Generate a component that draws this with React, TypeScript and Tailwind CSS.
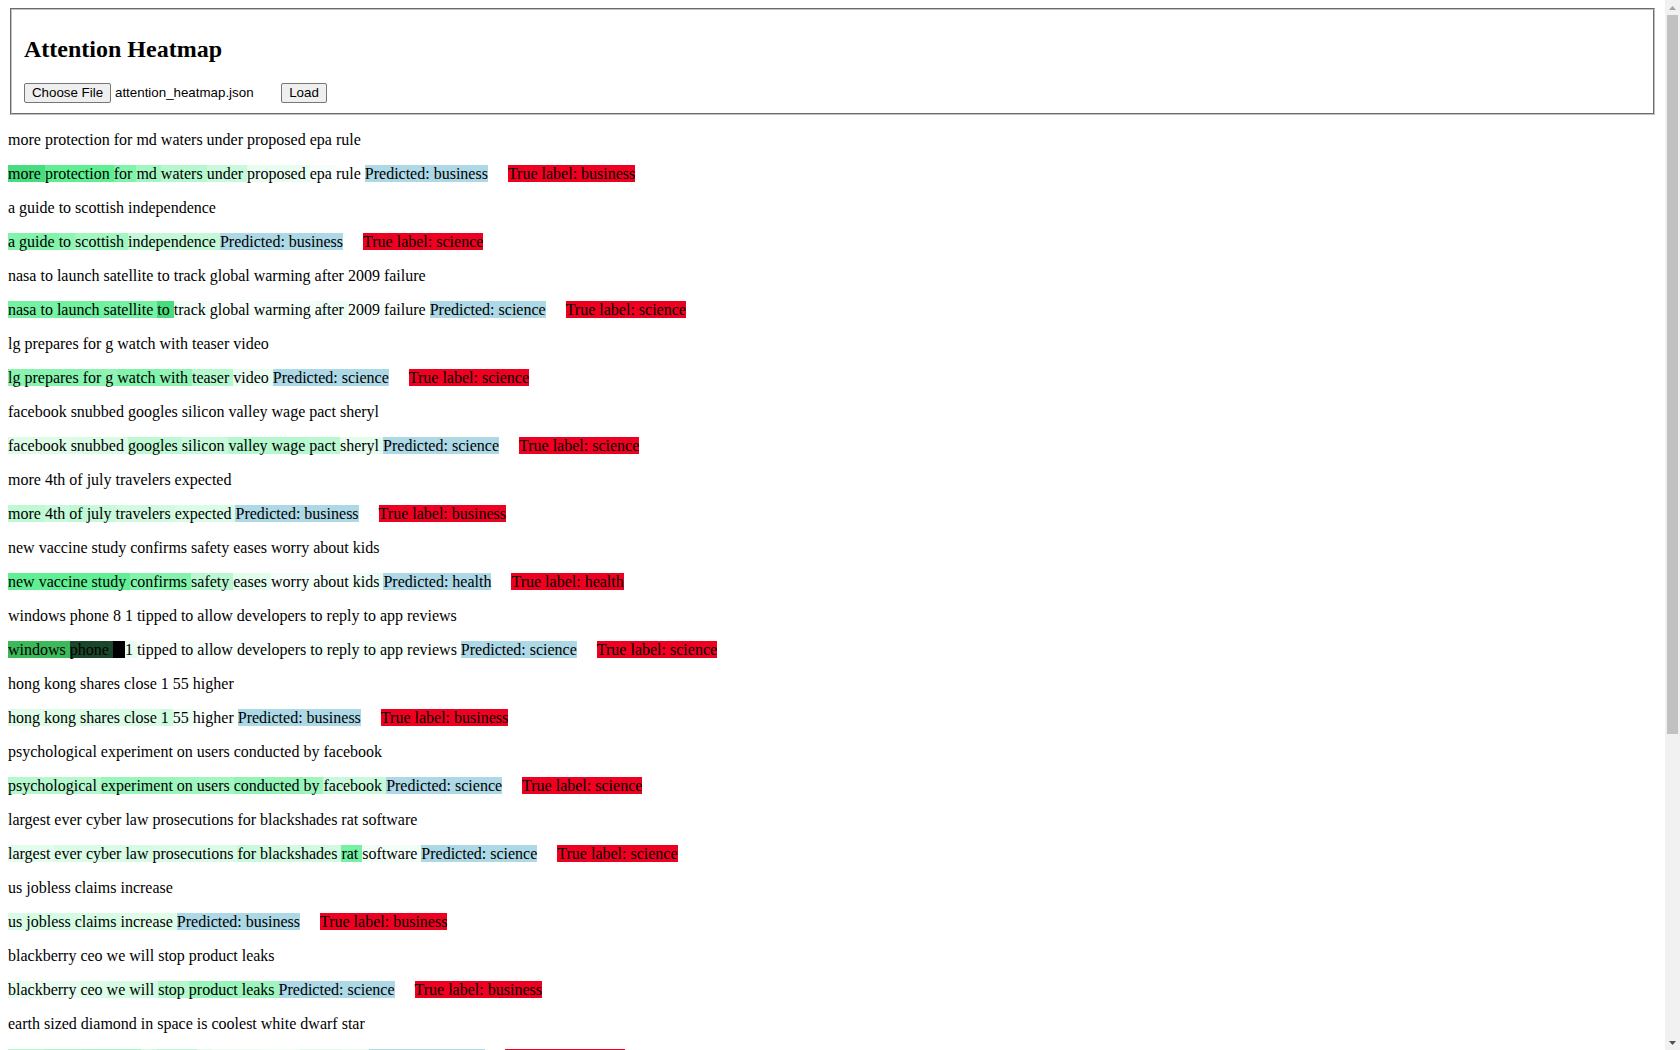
import React from "react";

type Entry = { words: [string, number | string][]; pred: string; truth: string };

const entries: Entry[] = [
  {
    words: [["more", 57], ["protection", 65], ["for", 73], ["md", 80], ["waters", 84], ["under", 88], ["proposed", 95], ["epa", 98], ["rule", 100]],
    pred: "business",
    truth: "business",
  },
  {
    words: [["a", 73], ["guide", 73], ["to", 76], ["scottish", 80], ["independence", 87]],
    pred: "business",
    truth: "science",
  },
  {
    words: [["nasa", 70], ["to", 71], ["launch", 69], ["satellite", 70], ["to", 57], ["track", 97], ["global", 99], ["warming", 98], ["after", 96], ["2009", 98], ["failure", 99]],
    pred: "science",
    truth: "science",
  },
  {
    words: [["lg", 75], ["prepares", 74], ["for", 75], ["g", 76], ["watch", 73], ["with", 76], ["teaser", 84], ["video", 95]],
    pred: "science",
    truth: "science",
  },
  {
    words: [["facebook", 93], ["snubbed", 92], ["googles", 86], ["silicon", 88], ["valley", 84], ["wage", 84], ["pact", 85], ["sheryl", 94]],
    pred: "science",
    truth: "science",
  },
  {
    words: [["more", 86], ["4th", 88], ["of", 86], ["july", 88], ["travelers", 90], ["expected", 92]],
    pred: "business",
    truth: "business",
  },
  {
    words: [["new", 66], ["vaccine", 66], ["study", 66], ["confirms", 73], ["safety", 85], ["eases", 94], ["worry", 98], ["about", 98], ["kids", 96]],
    pred: "health",
    truth: "health",
  },
  {
    words: [["windows", "hsl(134 51% 48%)"], ["phone", "hsl(140 47% 19%)"], ["8", 0], ["1", 95], ["tipped", 99], ["to", 98], ["allow", 99], ["developers", 99], ["to", 97], ["reply", 98], ["to", 97], ["app", 98], ["reviews", 99]],
    pred: "science",
    truth: "science",
  },
  {
    words: [["hong", 93], ["kong", 93], ["shares", 92], ["close", 92], ["1", 89], ["55", 96], ["higher", 99]],
    pred: "business",
    truth: "business",
  },
  {
    words: [["psychological", 84], ["experiment", 78], ["on", 79], ["users", 80], ["conducted", 77], ["by", 79], ["facebook", 88]],
    pred: "science",
    truth: "science",
  },
  {
    words: [["largest", 94], ["ever", 92], ["cyber", 92], ["law", 91], ["prosecutions", 92], ["for", 88], ["blackshades", 90], ["rat", 70], ["software", 97]],
    pred: "science",
    truth: "science",
  },
  {
    words: [["us", 92], ["jobless", 91], ["claims", 91], ["increase", 93]],
    pred: "business",
    truth: "business",
  },
  {
    words: [["blackberry", 95], ["ceo", 93], ["we", 91], ["will", 91], ["stop", 84], ["product", 78], ["leaks", 79]],
    pred: "science",
    truth: "business",
  },
  {
    words: [["earth", 84], ["sized", 82], ["diamond", 80], ["in", 90], ["space", 86], ["is", 94], ["coolest", 96], ["white", 97], ["dwarf", 93], ["star", 95]],
    pred: "science",
    truth: "science",
  },
  {
    words: [["apple", 80], ["unveils", 86], ["new", 92], ["ipad", 70], ["models", 88]],
    pred: "science",
    truth: "science",
  },
  {
    words: [["stocks", 75], ["rise", 82], ["as", 94], ["oil", 80], ["prices", 86], ["fall", 90]],
    pred: "business",
    truth: "business",
  },
  {
    words: [["ebola", 60], ["outbreak", 72], ["spreads", 85], ["in", 96], ["west", 92], ["africa", 88]],
    pred: "health",
    truth: "health",
  },
  {
    words: [["google", 78], ["buys", 84], ["nest", 74], ["for", 95], ["3", 97], ["2", 97], ["billion", 90]],
    pred: "science",
    truth: "business",
  },
  {
    words: [["fed", 70], ["keeps", 86], ["interest", 82], ["rates", 80], ["unchanged", 90]],
    pred: "business",
    truth: "business",
  },
  {
    words: [["study", 76], ["links", 84], ["sleep", 72], ["to", 95], ["heart", 78], ["health", 82]],
    pred: "health",
    truth: "health",
  },
];

function heatColor(l: number | string): string {
  if (typeof l === "string") return l;
  const s = l >= 65 ? 82 : l >= 55 ? 68 : 55;
  return `hsl(142 ${s}% ${l}%)`;
}

function HeatWord({ w, l }: { w: string; l: number | string }) {
  return <span style={{ backgroundColor: heatColor(l) }}>{w} </span>;
}

function Scrollbar() {
  return (
    <div className="w-[15px] shrink-0 bg-[#f1f1f1] flex flex-col">
      <div className="h-[15px] flex items-center justify-center">
        <svg width="7" height="4" viewBox="0 0 7 4">
          <polygon points="0,4 7,4 3.5,0" fill="#a3a3a3" />
        </svg>
      </div>
      <div className="flex-1 px-[2px]">
        <div className="h-[719px] bg-[#c1c1c1]" />
      </div>
      <div className="h-[15px] flex items-center justify-center">
        <svg width="7" height="4" viewBox="0 0 7 4">
          <polygon points="0,0 7,0 3.5,4" fill="#505050" />
        </svg>
      </div>
    </div>
  );
}

export default function App() {
  return (
    <div className="flex h-[1050px] overflow-hidden bg-white">
      <div className="flex-1 min-w-0 overflow-hidden">
        <div className="p-2 font-['Liberation_Serif',serif] text-[16px] leading-[18px] text-black">
          <div className="mx-[2px] border-2 border-[#c0c0c0] [border-style:groove] pt-[5.6px] px-3 pb-[10px]">
            <h2 className="my-[19.92px] text-[24px] leading-[27.6px] font-bold">Attention Heatmap</h2>
            <div className="flex items-center h-[20px] font-['Liberation_Sans',Arial,sans-serif] text-[13.333px]">
              <div className="flex items-center w-[253px]">
                <button className="h-[20px] w-[87px] bg-[#efefef] border border-[#767676] rounded-[2px] text-black leading-none">
                  Choose File
                </button>
                <span className="ml-[4px]">attention_heatmap.json</span>
              </div>
              <button className="ml-[4px] h-[20px] w-[46px] bg-[#efefef] border border-[#767676] rounded-[2px] text-black leading-none">
                Load
              </button>
            </div>
          </div>
          {entries.map((e, i) => (
            <React.Fragment key={i}>
              <p className="my-4">{e.words.map((x) => x[0]).join(" ")}</p>
              <p className="my-4 whitespace-nowrap">
                {e.words.map(([w, l], j) => (
                  <HeatWord key={j} w={w} l={l} />
                ))}
                <span className="bg-[#add8e6]">Predicted: {e.pred}</span>
                <span className="ml-5 bg-[#f00020]">True label: {e.truth}</span>
              </p>
            </React.Fragment>
          ))}
        </div>
      </div>
      <Scrollbar />
    </div>
  );
}
